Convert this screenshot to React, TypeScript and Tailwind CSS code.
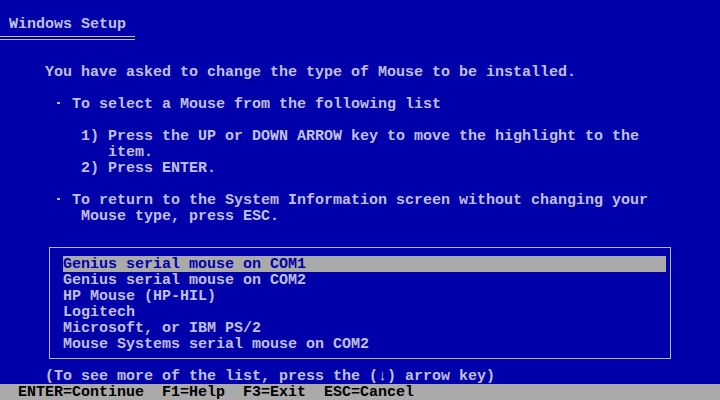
import React from "react";

const Bullet = () => (
  <span className="inline-flex w-[9px] h-[16px] items-start justify-center align-top">
    <span className="block w-[3px] h-[2px] mt-[6px] bg-[#c0c0e6]" />
  </span>
);

const Row = ({ pl = 0, children }: { pl?: number; children?: React.ReactNode }) => {
  const pad: Record<number, string> = {
    0: "pl-0",
    9: "pl-[9px]",
    45: "pl-[45px]",
    54: "pl-[54px]",
    81: "pl-[81px]",
    108: "pl-[108px]",
  };
  return <div className={`h-[16px] whitespace-pre ${pad[pl]}`}>{children}</div>;
};

const items = [
  "Genius serial mouse on COM1",
  "Genius serial mouse on COM2",
  "HP Mouse (HP-HIL)",
  "Logitech",
  "Microsoft, or IBM PS/2",
  "Mouse Systems serial mouse on COM2",
];

export default function App() {
  return (
    <div
      className="w-[720px] h-[400px] bg-[#0000aa] text-[#c0c0e6] text-[15px] leading-[18px] font-bold flex flex-col overflow-hidden"
      style={{ fontFamily: '"Liberation Mono", "DejaVu Sans Mono", monospace' }}
    >
      <Row />
      <Row pl={9}>Windows Setup</Row>
      <div className="h-[16px]">
        <div className="mt-[4px] w-[135px] h-[4px] border-y border-[#c0c0e6]" />
      </div>
      <Row />
      <Row pl={45}>You have asked to change the type of Mouse to be installed.</Row>
      <Row />
      <Row pl={54}>
        <Bullet /> To select a Mouse from the following list
      </Row>
      <Row />
      <Row pl={81}>1) Press the UP or DOWN ARROW key to move the highlight to the</Row>
      <Row pl={108}>item.</Row>
      <Row pl={81}>2) Press ENTER.</Row>
      <Row />
      <Row pl={54}>
        <Bullet /> To return to the System Information screen without changing your
      </Row>
      <Row pl={81}>Mouse type, press ESC.</Row>
      <Row />
      <div className="h-[128px]">
        <div className="ml-[49px] mt-[7px] w-[622px] h-[112px] border border-[#b4b4f0] pt-[8px] pl-[13px]">
          {items.map((t, i) => (
            <div
              key={t}
              className={`h-[16px] whitespace-pre w-[603px] ${
                i === 0 ? "bg-[#aaaaaa] text-[#0000aa]" : ""
              }`}
            >
              {t}
            </div>
          ))}
        </div>
      </div>
      <Row pl={45}>(To see more of the list, press the (↓) arrow key)</Row>
      <div className="h-[16px] bg-[#aaaaaa] text-black whitespace-pre pl-[18px]">
        ENTER=Continue  F1=Help  F3=Exit  ESC=Cancel
      </div>
    </div>
  );
}
